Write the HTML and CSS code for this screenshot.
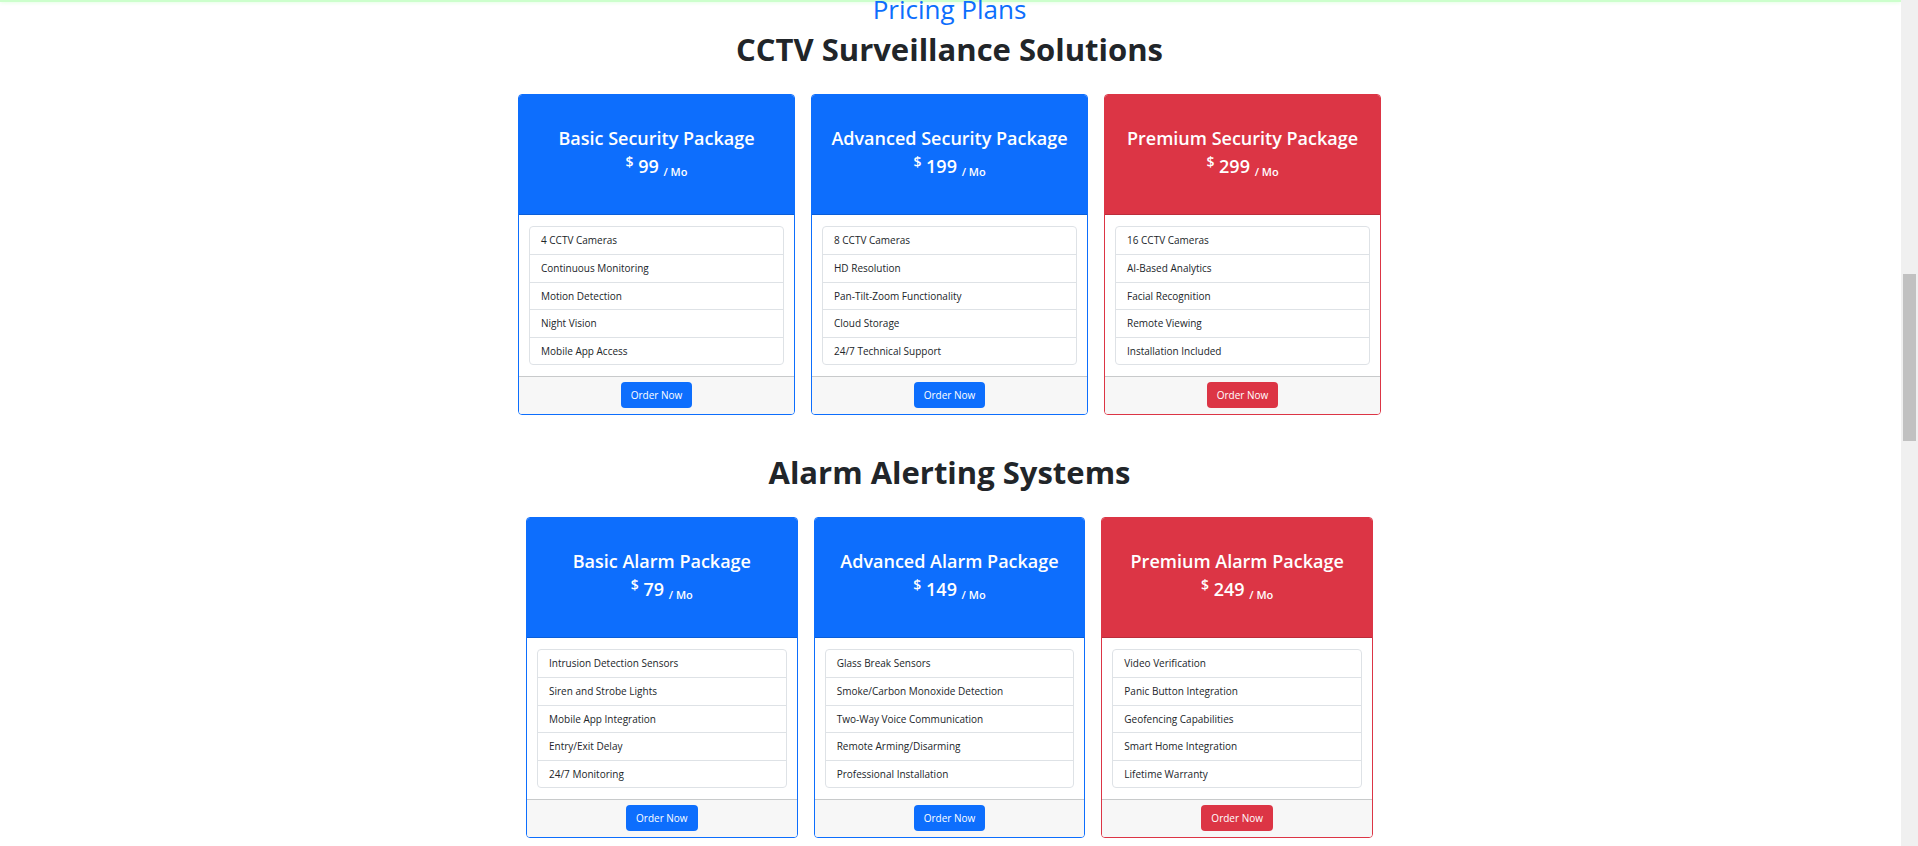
FILE: index.html
```html
<!DOCTYPE html>
<html lang="en">
<head>
<meta charset="utf-8">
<title>Pricing Plans</title>
<link rel="stylesheet" href="styles.css">
</head>
<body>
<main class="page">
  <div class="glow"></div>
  <h2 class="eyebrow">Pricing Plans</h2>
  <section class="plans">
    <h1 class="title">CCTV Surveillance Solutions</h1>
    <div class="cards">
      <article class="card">
        <header class="card-head"><h3 class="name">Basic Security Package</h3><p class="price"><sup>$</sup> 99 <sub>/ Mo</sub></p></header>
        <div class="card-body"><ul class="features"><li>4 CCTV Cameras</li><li>Continuous Monitoring</li><li>Motion Detection</li><li>Night Vision</li><li>Mobile App Access</li></ul></div>
        <footer class="card-foot"><button class="btn" type="button">Order Now</button></footer>
      </article>
      <article class="card">
        <header class="card-head"><h3 class="name">Advanced Security Package</h3><p class="price"><sup>$</sup> 199 <sub>/ Mo</sub></p></header>
        <div class="card-body"><ul class="features"><li>8 CCTV Cameras</li><li>HD Resolution</li><li>Pan-Tilt-Zoom Functionality</li><li>Cloud Storage</li><li>24/7 Technical Support</li></ul></div>
        <footer class="card-foot"><button class="btn" type="button">Order Now</button></footer>
      </article>
      <article class="card card-premium">
        <header class="card-head"><h3 class="name">Premium Security Package</h3><p class="price"><sup>$</sup> 299 <sub>/ Mo</sub></p></header>
        <div class="card-body"><ul class="features"><li>16 CCTV Cameras</li><li>AI-Based Analytics</li><li>Facial Recognition</li><li>Remote Viewing</li><li>Installation Included</li></ul></div>
        <footer class="card-foot"><button class="btn" type="button">Order Now</button></footer>
      </article>
    </div>
  </section>
  <section class="plans plans-alarm">
    <h1 class="title">Alarm Alerting Systems</h1>
    <div class="cards">
      <article class="card">
        <header class="card-head"><h3 class="name">Basic Alarm Package</h3><p class="price"><sup>$</sup> 79 <sub>/ Mo</sub></p></header>
        <div class="card-body"><ul class="features"><li>Intrusion Detection Sensors</li><li>Siren and Strobe Lights</li><li>Mobile App Integration</li><li>Entry/Exit Delay</li><li>24/7 Monitoring</li></ul></div>
        <footer class="card-foot"><button class="btn" type="button">Order Now</button></footer>
      </article>
      <article class="card">
        <header class="card-head"><h3 class="name">Advanced Alarm Package</h3><p class="price"><sup>$</sup> 149 <sub>/ Mo</sub></p></header>
        <div class="card-body"><ul class="features"><li>Glass Break Sensors</li><li>Smoke/Carbon Monoxide Detection</li><li>Two-Way Voice Communication</li><li>Remote Arming/Disarming</li><li>Professional Installation</li></ul></div>
        <footer class="card-foot"><button class="btn" type="button">Order Now</button></footer>
      </article>
      <article class="card card-premium">
        <header class="card-head"><h3 class="name">Premium Alarm Package</h3><p class="price"><sup>$</sup> 249 <sub>/ Mo</sub></p></header>
        <div class="card-body"><ul class="features"><li>Video Verification</li><li>Panic Button Integration</li><li>Geofencing Capabilities</li><li>Smart Home Integration</li><li>Lifetime Warranty</li></ul></div>
        <footer class="card-foot"><button class="btn" type="button">Order Now</button></footer>
      </article>
    </div>
  </section>
</main>
<div class="scrollbar"><div class="thumb"></div></div>
</body>
</html>
```
FILE: styles.css
```css
* { box-sizing: border-box; }

body {
  display: flex;
  height: 100vh;
  margin: 0;
  overflow: hidden;
  background: #fff;
  color: #212529;
  font-family: "Segoe UI", "Open Sans", "Noto Sans", sans-serif;
  font-size: 10px;
}

h1, h2, h3, p, ul { margin: 0; padding: 0; }

.page { flex: 1; min-width: 0; overflow: hidden; }

.glow {
  height: 2px;
  background: #ccffcc;
  box-shadow: 0 0 4px #ccffcc;
}

.eyebrow {
  margin: 0 2px 8px 0;
  color: #0d6efd;
  font-size: 26px;
  font-weight: 500;
  line-height: 14px;
  text-align: center;
}

.plans { max-width: 865px; margin: 0 auto 32px; padding-right: 2px; }
.plans-alarm { max-width: 849px; }

.title {
  margin-bottom: 19px;
  font-size: 31px;
  font-weight: 700;
  line-height: 51px;
  text-align: center;
}

.cards { display: grid; grid-template-columns: repeat(3, 1fr); gap: 16px; }

.card {
  --tone: #0d6efd;
  --edge: #0b5ed7;
  overflow: hidden;
  border: 1px solid var(--tone);
  border-radius: 4px;
  background: #fff;
}
.card-premium { --tone: #dc3545; --edge: #bb2d3b; }

.card-head {
  padding: 29px 5px 34px;
  border-bottom: 1px solid var(--edge);
  background: var(--tone);
  color: #fff;
  text-align: center;
}

.name, .price { font-size: 18px; font-weight: 600; line-height: 28px; }
.price sup, .price sub { position: relative; line-height: 0; vertical-align: baseline; }
.price sup { top: -6px; font-size: 14px; }
.price sub { top: 3px; font-size: 11px; }

.card-body { padding: 11px 10px; }

.features {
  display: grid;
  grid-auto-rows: 1fr;
  min-height: 139px;
  border: 1px solid #dee2e6;
  border-radius: 4px;
  list-style: none;
}
.features li { padding: 5px 11px; line-height: 16px; }
.features li + li { border-top: 1px solid #dee2e6; }

.card-foot {
  padding: 5px 5px 6px;
  border-top: 1px solid #c8cacb;
  background: #f7f7f7;
  text-align: center;
}

.btn {
  display: block;
  margin: 0 auto;
  padding: 5px 10px;
  border: 0;
  border-radius: 4px;
  background: var(--tone);
  color: #fff;
  font: inherit;
  line-height: 16px;
}

.scrollbar { width: 17px; padding: 274px 2px 0; background: #f0f0f0; }
.thumb { height: 167px; background: #c1c1c1; }
```
